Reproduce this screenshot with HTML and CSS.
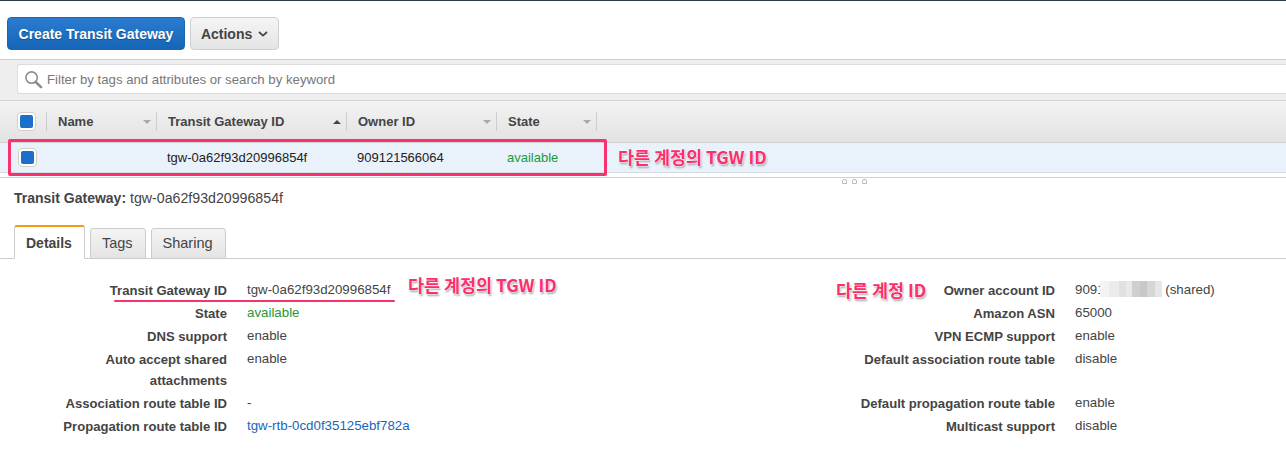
FILE: index.html
```html
<!DOCTYPE html>
<html lang="en">

<head>
    <meta charset="UTF-8">
    <title>Transit Gateways</title>
    <link rel="stylesheet" href="styles.css">
</head>

<body>
    <div class="page">
        <!-- Toolbar -->
        <div class="toolbar">
            <button class="btn btn-primary">Create Transit Gateway</button>
            <button class="btn btn-default">Actions
                <svg class="chevron" width="10" height="6" viewBox="0 0 10 6">
                    <path d="M1 1l4 3.6L9 1" fill="none" stroke="#444" stroke-width="1.7" />
                </svg>
            </button>
        </div>

        <!-- Filter -->
        <div class="filter-band">
            <div class="filter-box">
                <svg class="search-icon" width="19" height="19" viewBox="0 0 19 19">
                    <circle cx="7.6" cy="7.6" r="5.7" fill="none" stroke="#8d8d8d" stroke-width="1.6" />
                    <path d="M11.8 12l5.2 5.2" fill="none" stroke="#8d8d8d" stroke-width="2.6" stroke-linecap="round" />
                </svg>
                <span>Filter by tags and attributes or search by keyword</span>
            </div>
        </div>

        <!-- Table -->
        <div class="table-head">
            <div class="cell cell-check"><span class="check"><i></i></span></div>
            <div class="cell cell-name"><b>Name</b><span class="sort"></span></div>
            <div class="cell cell-id"><b>Transit Gateway ID</b><span class="sort sort-up"></span></div>
            <div class="cell cell-owner"><b>Owner ID</b><span class="sort"></span></div>
            <div class="cell cell-state"><b>State</b><span class="sort"></span></div>
        </div>
        <div class="table-row">
            <div class="cell cell-check"><span class="check"><i></i></span></div>
            <div class="cell cell-name"></div>
            <div class="cell cell-id">tgw-0a62f93d20996854f</div>
            <div class="cell cell-owner">909121566064</div>
            <div class="cell cell-state green">available</div>
        </div>
        <div class="table-end">
            <div class="grip"><i></i><i></i><i></i></div>
        </div>

        <!-- Detail pane -->
        <div class="pane-title"><b>Transit Gateway:</b> <span>tgw-0a62f93d20996854f</span></div>

        <div class="tabs">
            <div class="tab tab-active">Details</div>
            <div class="tab">Tags</div>
            <div class="tab">Sharing</div>
        </div>

        <div class="details">
            <div class="label">Transit Gateway ID</div>
            <div class="value">tgw-0a62f93d20996854f</div>
            <div class="label">Owner account ID</div>
            <div class="value">9091<span class="blurred"></span> (shared)</div>

            <div class="label">State</div>
            <div class="value green">available</div>
            <div class="label">Amazon ASN</div>
            <div class="value">65000</div>

            <div class="label">DNS support</div>
            <div class="value">enable</div>
            <div class="label">VPN ECMP support</div>
            <div class="value">enable</div>

            <div class="label">Auto accept shared<br>attachments</div>
            <div class="value">enable</div>
            <div class="label">Default association route table</div>
            <div class="value">disable</div>

            <div class="label">Association route table ID</div>
            <div class="value">-</div>
            <div class="label">Default propagation route table</div>
            <div class="value">enable</div>

            <div class="label">Propagation route table ID</div>
            <div class="value"><a href="#">tgw-rtb-0cd0f35125ebf782a</a></div>
            <div class="label">Multicast support</div>
            <div class="value">disable</div>
        </div>

        <!-- Annotations drawn over the screenshot -->
        <div class="mark-box"></div>
        <div class="mark-line"></div>
        <div class="note note-row">다른 계정의 TGW ID</div>
        <div class="note note-detail">다른 계정의 TGW ID</div>
        <div class="note note-owner">다른 계정 ID</div>
    </div>
</body>

</html>
```

FILE: styles.css
```css
body {
    font-family: "Liberation Sans", Arial, sans-serif;
    font-size: 13px;
    margin: 0;
    padding: 0;
    background-color: #ffffff;
    color: #444444;
}

.page {
    position: relative;
    height: 474px;
    overflow: hidden;
    border-top: 1px solid #2b3a4d;
}

.toolbar {
    display: flex;
    gap: 5px;
    height: 58px;
    padding: 16px 0 0 7px;
    box-sizing: border-box;
}

.btn {
    height: 33px;
    border-radius: 4px;
    font-family: inherit;
    font-size: 14px;
    font-weight: bold;
    padding: 0;
}

.btn-primary {
    width: 178px;
    color: #ffffff;
    background: linear-gradient(#2b7cd0, #1566b7);
    border: 1px solid #1a66b0;
    text-shadow: 0 1px 1px rgba(0, 0, 0, 0.3);
}

.btn-default {
    width: 89px;
    color: #444444;
    background: linear-gradient(#f5f5f5, #e4e4e4);
    border: 1px solid #cfcfcf;
}

.chevron {
    margin-left: 2px;
    vertical-align: 2px;
}

.filter-band {
    height: 42px;
    padding: 4px 0 0 17px;
    box-sizing: border-box;
    background-color: #eeeeee;
    border-top: 1px solid #cccccc;
    border-bottom: 1px solid #d4d4d4;
}

.filter-box {
    display: flex;
    align-items: center;
    height: 28px;
    padding-left: 6px;
    background-color: #ffffff;
    border: 1px solid #dddddd;
    border-right: none;
    border-radius: 3px 0 0 3px;
    color: #777777;
    font-size: 13.2px;
}

.search-icon {
    margin-right: 4px;
}

.table-head,
.table-row {
    display: flex;
    align-items: center;
}

.table-head {
    height: 42px;
    box-sizing: border-box;
    background: linear-gradient(#f3f3f3, #e2e2e2);
    border-bottom: 1px solid #d2d2d2;
}

.table-row {
    height: 29px;
    background-color: #e9f1fb;
    border-bottom: 1px solid #d5dbe3;
    color: #222222;
}

.cell {
    position: relative;
    display: flex;
    align-items: center;
    box-sizing: border-box;
    height: 100%;
    font-size: 13px;
}

.table-head .cell:after {
    content: "";
    position: absolute;
    right: 0;
    top: 11px;
    height: 19px;
    border-right: 1px solid #cccccc;
}

.cell-check {
    width: 47px;
    padding-left: 18px;
}

.table-head .cell-check {
    padding-left: 17px;
}

.cell-name {
    width: 110px;
    padding-left: 11px;
}

.cell-id {
    width: 190px;
    padding-left: 10px;
}

.table-head .cell-id {
    padding-left: 11px;
}

.cell-owner {
    width: 150px;
    padding-left: 10px;
}

.table-head .cell-owner {
    padding-left: 11px;
}

.cell-state {
    width: 100px;
    padding-left: 10px;
}

.table-head .cell-state {
    padding-left: 11px;
}

.table-head b {
    flex: 1;
    color: #444444;
}

.sort {
    width: 0;
    height: 0;
    margin: 1px 6px 0 0;
    border-left: 4px solid transparent;
    border-right: 4px solid transparent;
    border-top: 4px solid #a8a8a8;
}

.sort-up {
    border-top: none;
    border-bottom: 4px solid #444444;
}

.check {
    display: flex;
    align-items: center;
    justify-content: center;
    width: 19px;
    height: 19px;
    box-sizing: border-box;
    background-color: #ffffff;
    border: 1px solid #cfcfcf;
    border-radius: 4px;
}

.check i {
    width: 13px;
    height: 13px;
    background-color: #1a6fc9;
    border-radius: 2px;
}

.green {
    color: #1d9a37;
}

.table-end {
    height: 4px;
    border-bottom: 1px solid #d0d0d0;
    position: relative;
}

.grip {
    position: absolute;
    top: 6px;
    left: 842px;
    display: flex;
    gap: 5px;
}

.grip i {
    width: 3px;
    height: 3px;
    border: 1px solid #bbbbbb;
    border-radius: 2px 2px 0 0;
}

.pane-title {
    padding: 12px 0 0 14px;
    height: 32px;
    box-sizing: content-box;
    font-size: 14px;
}

.pane-title span {
    font-size: 14.2px;
}

.tabs {
    display: flex;
    align-items: flex-end;
    gap: 5px;
    height: 36px;
    padding-left: 14px;
    border-bottom: 1px solid #cccccc;
}

.tab {
    box-sizing: border-box;
    height: 31px;
    margin-bottom: -1px;
    padding: 6px 12px 0 11px;
    font-size: 14.5px;
    background: linear-gradient(#f4f4f4, #e4e4e4);
    border: 1px solid #cccccc;
    border-radius: 3px 3px 0 0;
}

.tab-active {
    height: 34px;
    padding: 8px 12px 0 11px;
    font-size: 14px;
    font-weight: bold;
    background: #ffffff;
    border-top: 2px solid #f39c12;
    border-bottom: 1px solid #ffffff;
}

.details {
    display: grid;
    grid-template-columns: 227px 561px 227px 1fr;
    column-gap: 20px;
    row-gap: 2px;
    padding-top: 21px;
    line-height: 21px;
}

.label {
    text-align: right;
    font-size: 13.1px;
    font-weight: bold;
}

.value {
    margin-top: -1px;
    font-size: 13.3px;
}

.value a {
    color: #1666c0;
    text-decoration: none;
}

/* owner id is blurred in the original, the block sits over the last digit */
.blurred {
    display: inline-block;
    width: 62px;
    height: 16px;
    margin-left: -5px;
    vertical-align: -3px;
    background: linear-gradient(90deg,
            #f3f3f3 0 15%, #ebebeb 15% 30%, #e0e0e0 30% 42%, #e9e9e9 42% 52%,
            #cfcfcf 52% 64%, #c8c8c8 64% 76%, #d6d6d6 76% 88%, #e6e6e6 88% 100%);
}

/* annotations */
.mark-box {
    position: absolute;
    left: 8px;
    top: 138px;
    width: 599px;
    height: 37px;
    box-sizing: border-box;
    border: 3px solid #f9326f;
    border-radius: 2px;
}

.mark-line {
    position: absolute;
    left: 114px;
    top: 299px;
    width: 281px;
    height: 2px;
    background-color: #f9326f;
    border-radius: 1px;
}

.note {
    position: absolute;
    font-family: "Noto Sans CJK KR", "Liberation Sans", sans-serif;
    font-size: 17.4px;
    font-weight: bold;
    line-height: 20px;
    color: #fb2f6d;
    white-space: nowrap;
    text-shadow: 0 0 2px #ffffff, 0 0 2px #ffffff, 1px 2px 2px #a0a0a0;
}

.note-row {
    left: 618px;
    top: 146px;
}

.note-detail {
    left: 408px;
    top: 274px;
}

.note-owner {
    left: 836px;
    top: 279px;
}
```
